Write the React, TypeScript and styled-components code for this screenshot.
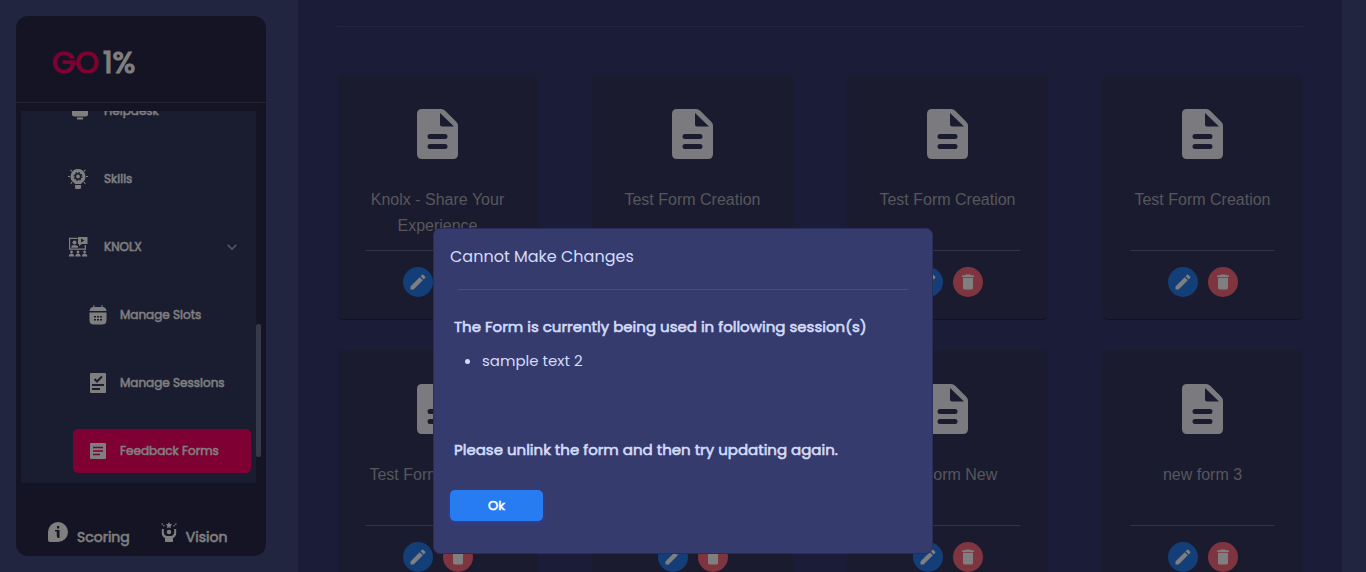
import React from "react";
import styled, { createGlobalStyle, css } from "styled-components";
import { MdDelete, MdEdit, MdKeyboardArrowDown } from "react-icons/md";

const GlobalStyle = createGlobalStyle`
  *, *::before, *::after { box-sizing: border-box; }
  body {
    margin: 0;
    background: #444a80;
    color: #fff;
    font-family: Poppins, Inter, "Liberation Sans", sans-serif;
    overflow: hidden;
  }
`;

/* Thickens the regular weight while keeping its letter widths. */
const emphasis = css`
  font-weight: 400;
  -webkit-text-stroke: 0.04em currentColor;
`;

const Page = styled.div`
  display: flex;
  gap: 32px;
  height: 100vh;
  padding-left: 16px;
  padding-right: 24px;
`;

const Sidebar = styled.aside`
  display: flex;
  flex-direction: column;
  flex: 0 0 250px;
  margin: 16px 0;
  border-radius: 12px;
  background: #28294a;
  overflow: hidden;
`;

const Brand = styled.header`
  display: flex;
  align-items: center;
  gap: 4px;
  flex: 0 0 87px;
  padding: 8px 36px 0;
  border-bottom: 1px solid #48495f;
  font-size: 30px;
  ${emphasis}
`;

const BrandAccent = styled.span`
  color: #fe0066;
`;

const ScrollArea = styled.div`
  display: flex;
  flex: 1;
  min-height: 0;
  margin: 8px 5px 0;
`;

const Nav = styled.nav`
  display: flex;
  flex: 1;
  flex-direction: column;
  justify-content: flex-end;
  gap: 24px;
  padding: 0 5px 10px 31px;
  background: #343860;
  overflow: hidden;
`;

const Track = styled.div`
  display: flex;
  flex-direction: column;
  justify-content: flex-end;
  width: 5px;
  padding-bottom: 26px;
`;

const Thumb = styled.div`
  height: 133px;
  border-radius: 3px;
  background: #6c7098;
`;

const NavLink = styled.a<{ $nested?: boolean; $active?: boolean }>`
  display: flex;
  align-items: center;
  flex: 0 0 44px;
  gap: ${(p) => (p.$nested ? 12 : 16)}px;
  margin-left: ${(p) => (p.$nested ? 21 : 0)}px;
  padding: 0 9px 0 ${(p) => (p.$nested ? 15 : 16)}px;
  border-radius: 5px;
  background: ${(p) => (p.$active ? "#fe0066" : "transparent")};
  color: #fff;
  font-size: 12px;
  text-decoration: none;
  white-space: nowrap;
  ${emphasis}

  svg { flex: none; }
  svg:last-child:not(:first-child) { margin-left: auto; color: #a9abc0; }
`;

const SideFooter = styled.footer`
  display: flex;
  align-items: flex-end;
  flex: 0 0 73px;
  gap: 31px;
  padding: 0 32px 4px;
`;

const FooterLink = styled.a`
  display: flex;
  align-items: center;
  gap: 9px;
  color: #fff;
  font-size: 14px;
  line-height: 24px;
  text-decoration: none;
  ${emphasis}

  svg { margin-bottom: 10px; }
`;

const Main = styled.main`
  flex: 1;
  min-width: 0;
  padding: 26px 39px 0;
  background: #363b70;
  overflow: hidden;
`;

const Rule = styled.hr`
  height: 1px;
  margin: 0 0 48px;
  border: 0;
  background: #4a4a78;
`;

const Grid = styled.div`
  display: grid;
  grid-template-columns: repeat(4, minmax(0, 1fr));
  gap: 31px 54px;
`;

const Card = styled.article`
  display: flex;
  flex-direction: column;
  align-items: center;
  height: 244px;
  padding: 34px 28px 0;
  border-radius: 6px;
  background: #34365c;
  box-shadow: 0 2px 1px -1px rgba(0, 0, 0, 0.3), 0 1px 1px rgba(0, 0, 0, 0.15);
  color: #f4f4ff;
`;

const CardTitle = styled.h2`
  height: 63px;
  margin: 28px 0 0;
  color: #acadb8;
  font: 400 16px/26px "Liberation Sans", Arial, sans-serif;
  text-align: center;
`;

const CardActions = styled.div`
  display: flex;
  justify-content: center;
  gap: 10px;
  width: 100%;
  padding-top: 16px;
  border-top: 1px solid #66687e;
`;

const RoundButton = styled.button<{ $tone: string }>`
  display: flex;
  align-items: center;
  justify-content: center;
  width: 30px;
  height: 30px;
  padding: 0;
  border: 0;
  border-radius: 50%;
  background: ${(p) => p.$tone};
  color: #fff;
`;

const Backdrop = styled.div`
  position: fixed;
  inset: 0;
  display: flex;
  align-items: flex-end;
  justify-content: center;
  padding-bottom: 18px;
  background: rgba(0, 0, 0, 0.5);
`;

const Dialog = styled.section`
  width: 500px;
  height: 326px;
  padding: 16px;
  border: 1px solid #2a2e5a;
  border-radius: 7px;
  background: #363b6e;
  color: #d4dcfa;
  font-size: 15px;
`;

const DialogTitle = styled.h1`
  margin: 0;
  font-size: 16px;
  font-weight: 400;
  line-height: 24px;
`;

const DialogRule = styled.hr`
  height: 1px;
  margin: 20px 8px 25px;
  border: 0;
  background: #494d7a;
`;

const Notice = styled.p`
  margin: 0 4px;
  line-height: 24px;
  ${emphasis}
`;

const Sessions = styled.ul`
  height: 89px;
  margin: 10px 0 0;
  padding-left: 32px;
  line-height: 24px;
`;

const OkButton = styled.button`
  display: block;
  width: 93px;
  height: 31px;
  margin-top: 28px;
  border: 0;
  border-radius: 5px;
  background: #277cf2;
  box-shadow: 0 2px 4px rgba(39, 80, 242, 0.3);
  color: #fff;
  font-family: inherit;
  font-size: 13px;
  ${emphasis}
`;

const HelpdeskIcon = () => (
  <svg width="20" height="20" viewBox="0 0 20 20" fill="currentColor" aria-hidden="true">
    <path d="M4 0h16v13q0 2.500-2.500 2.500h-11Q4 15.500 4 13zM9 16.500h6v2H9z" />
  </svg>
);

const SkillsIcon = () => (
  <svg width="20" height="20" viewBox="0 0 20 20" fill="currentColor" aria-hidden="true">
    <path d="M10 0a7.500 7.500 0 0 0-4 13.800l1 1.200h6l1-1.200A7.500 7.500 0 0 0 10 0M7 16h6v2.500Q13 20 11.500 20h-3Q7 20 7 18.500z" />
    <path d="M0 7h2v1H0zm18 0h2v1h-2zM3 .5l1.500 1.500-.8.8L2.200 1.300zm14 0L15.500 2l.8.8 1.500-1.500zM3 15l1.500-1.500-.8-.8-1.500 1.500zm14 0-1.500-1.500.8-.8 1.500 1.500z" />
    <circle cx="10" cy="7.500" r="2.700" fill="none" stroke="#343860" strokeWidth="1.600" />
    <circle cx="10" cy="7.500" r="3.900" fill="none" stroke="#343860" strokeWidth="1.200" strokeDasharray="1.530" />
  </svg>
);

const KnolxIcon = () => (
  <svg width="20" height="20" viewBox="0 0 20 20" fill="currentColor" aria-hidden="true">
    <path d="M1 .8h8.500V2H2.200v9.500h14.500V8H18v4.800H1z" />
    <path fillRule="evenodd" d="M10 0h9.500v7h-6L11 9.300V7h-1zm3 1.500v4L16.500 3.500z" />
    <path d="M3.300 10.800V9.500Q4 8.300 5.500 8.300h2Q9 8.300 10 9.500v1.300z" />
    <circle cx="6.500" cy="5.500" r="2" />
    <circle cx="3.500" cy="15" r="1.400" />
    <circle cx="10" cy="15" r="1.400" />
    <circle cx="16.600" cy="15" r="1.400" />
    <path d="M.8 19.500q0-3 2.700-3t2.700 3zM7.300 19.500q0-3 2.700-3t2.700 3zM13.900 19.500q0-3 2.700-3t2.700 3z" />
  </svg>
);

const CalendarIcon = () => (
  <svg width="20" height="20" viewBox="0 0 20 20" fill="currentColor" aria-hidden="true">
    <path d="M5.500 0h1v2h7V0h1v2Q18 2 18.500 6h-17Q2 2 5.500 2z" />
    <path fillRule="evenodd" d="M1.500 7.500h17V15q0 4.500-4.500 4.500H6Q1.500 19.500 1.500 15zM6 11v1.500h2V11zm3 0v1.500h2V11zm3 0v1.500h2V11zm-6 3v1.500h2V14zm3 0v1.500h2V14zm3 0v1.500h2V14z" />
  </svg>
);

const ChecklistIcon = () => (
  <svg width="20" height="20" viewBox="0 0 20 20" aria-hidden="true">
    <rect x="2" width="16" height="20" rx="1" fill="currentColor" />
    <g fill="none" stroke="#343860" strokeWidth="2">
      <path d="m6.500 6 2.500 2.500 5-5M4 12h12M4 16h8" />
    </g>
  </svg>
);

const FormsIcon = () => (
  <svg width="20" height="20" viewBox="0 0 20 20" aria-hidden="true">
    <rect x="2" y="2" width="16" height="16" rx="1" fill="currentColor" />
    <path d="M5 6.500h10M5 10h10M5 13.500h7" fill="none" stroke="#fe0066" strokeWidth="1.500" />
  </svg>
);

const ScoringIcon = () => (
  <svg width="20" height="20" viewBox="0 0 20 20" fill="currentColor" aria-hidden="true">
    <path fillRule="evenodd" d="M10 0a10 10 0 0 1 0 20H2q-2 0-2-2v-8A10 10 0 0 1 10 0M9 4v2.400h2.200V4zM7 8v1.500h1.800V14q0 2 1.700 2h1v-8z" />
  </svg>
);

const VisionIcon = () => (
  <svg width="16" height="20" viewBox="0 0 16 20" fill="currentColor" aria-hidden="true">
    <path d="m8 0 1 2 2.200.3L9.600 4l.4 2.200L8 5.200 6 6.200 6.400 4 4.800 2.300 7 2z" />
    <circle cx="8" cy="10" r="2.200" />
    <path d="M.8 7h2v3q0 3.500 3.200 4h4q3.200-.5 3.200-4V7h2v4q0 3.500-3.200 5v4H4v-4Q.8 14.500.8 11z" />
    <path d="m.6 1.500 3 3M15.400 1.500l-3 3" stroke="currentColor" strokeWidth="1.200" strokeDasharray="1.500 1" />
  </svg>
);

const DocumentIcon = () => (
  <svg width="41" height="50" viewBox="0 0 41 50" fill="currentColor" aria-hidden="true">
    <path
      fillRule="evenodd"
      d="M5 0H24Q26.500 0 28.500 2L39 12.500Q41 14.500 41 17V45Q41 50 36 50H5Q0 50 0 45V5Q0 0 5 0ZM23 4V15.500Q23 17.500 25 17.500H37ZM13 25a2.500 2.500 0 0 0 0 5H28a2.500 2.500 0 0 0 0-5ZM13 35a2.500 2.500 0 0 0 0 5H28a2.500 2.500 0 0 0 0-5Z"
    />
  </svg>
);

const forms = [
  "Knolx - Share Your Experience",
  "Test Form Creation",
  "Test Form Creation",
  "Test Form Creation",
  "Test Form Creation",
  "Test Form",
  "My Form New",
  "new form 3",
];

export default function App() {
  return (
    <>
      <GlobalStyle />
      <Page>
        <Sidebar>
          <Brand>
            <BrandAccent>GO</BrandAccent>
            <span>1%</span>
          </Brand>
          <ScrollArea>
            <Nav>
              <NavLink href="#helpdesk"><HelpdeskIcon />Helpdesk</NavLink>
              <NavLink href="#skills"><SkillsIcon />Skills</NavLink>
              <NavLink href="#knolx"><KnolxIcon />KNOLX<MdKeyboardArrowDown size={20} /></NavLink>
              <NavLink href="#slots" $nested><CalendarIcon />Manage Slots</NavLink>
              <NavLink href="#sessions" $nested><ChecklistIcon />Manage Sessions</NavLink>
              <NavLink href="#forms" $nested $active><FormsIcon />Feedback Forms</NavLink>
            </Nav>
            <Track><Thumb /></Track>
          </ScrollArea>
          <SideFooter>
            <FooterLink href="#scoring"><ScoringIcon />Scoring</FooterLink>
            <FooterLink href="#vision"><VisionIcon />Vision</FooterLink>
          </SideFooter>
        </Sidebar>
        <Main>
          <Rule />
          <Grid>
            {forms.map((title, i) => (
              <Card key={i}>
                <DocumentIcon />
                <CardTitle>{title}</CardTitle>
                <CardActions>
                  <RoundButton $tone="#267cf0" aria-label="Edit form"><MdEdit size={20} /></RoundButton>
                  <RoundButton $tone="#ff6b7e" aria-label="Delete form"><MdDelete size={20} /></RoundButton>
                </CardActions>
              </Card>
            ))}
          </Grid>
        </Main>
      </Page>
      <Backdrop>
        <Dialog role="dialog" aria-modal="true" aria-labelledby="dialog-title">
          <DialogTitle id="dialog-title">Cannot Make Changes</DialogTitle>
          <DialogRule />
          <Notice>The Form is currently being used in following session(s)</Notice>
          <Sessions>
            <li>sample text 2</li>
          </Sessions>
          <Notice>Please unlink the form and then try updating again.</Notice>
          <OkButton>Ok</OkButton>
        </Dialog>
      </Backdrop>
    </>
  );
}
